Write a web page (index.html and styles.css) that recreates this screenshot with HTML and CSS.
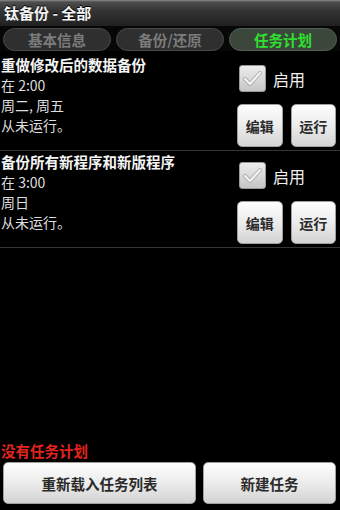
FILE: index.html
```html
<!DOCTYPE html>
<html lang="zh">
<head>
<meta charset="utf-8">
<link rel="stylesheet" href="styles.css">
</head>
<body>
<div class="app">
  <div class="titlebar">钛备份 - 全部</div>
  <div class="tabs">
    <div class="tab">基本信息</div>
    <div class="tab">备份/还原</div>
    <div class="tab active">任务计划</div>
  </div>
  <div class="list">
    <div class="row">
      <div class="info">
        <div class="name">重做修改后的数据备份</div>
        <div class="line">在 2:00</div>
        <div class="line">周二, 周五</div>
        <div class="line">从未运行。</div>
      </div>
      <div class="actions">
        <div class="enable">
          <span class="check"><svg width="27" height="27" viewBox="0 0 27 27"><path d="M6 14 L11 19 L21 8" fill="none" stroke="#a9a9a9" stroke-width="4" stroke-linecap="round" stroke-linejoin="round"/><path d="M6 14 L11 19 L21 8" fill="none" stroke="#f2f2f2" stroke-width="2.4" stroke-linecap="round" stroke-linejoin="round"/></svg></span>
          <span class="enable-label">启用</span>
        </div>
        <div class="btns">
          <div class="btn small">编辑</div>
          <div class="btn small">运行</div>
        </div>
      </div>
    </div>
    <div class="row">
      <div class="info">
        <div class="name">备份所有新程序和新版程序</div>
        <div class="line">在 3:00</div>
        <div class="line">周日</div>
        <div class="line">从未运行。</div>
      </div>
      <div class="actions">
        <div class="enable">
          <span class="check"><svg width="27" height="27" viewBox="0 0 27 27"><path d="M6 14 L11 19 L21 8" fill="none" stroke="#a9a9a9" stroke-width="4" stroke-linecap="round" stroke-linejoin="round"/><path d="M6 14 L11 19 L21 8" fill="none" stroke="#f2f2f2" stroke-width="2.4" stroke-linecap="round" stroke-linejoin="round"/></svg></span>
          <span class="enable-label">启用</span>
        </div>
        <div class="btns">
          <div class="btn small">编辑</div>
          <div class="btn small">运行</div>
        </div>
      </div>
    </div>
  </div>
  <div class="footer">
    <div class="status">没有任务计划</div>
    <div class="footer-btns">
      <div class="btn big">重新载入任务列表</div>
      <div class="btn big">新建任务</div>
    </div>
  </div>
</div>
</body>
</html>
```
FILE: styles.css
```css
* { box-sizing: border-box; }
html, body {
  margin: 0;
  padding: 0;
  background: #000;
}
body {
  font-family: "Noto Sans CJK SC", "Noto Sans", sans-serif;
  color: #e2e2e2;
}
.app {
  width: 340px;
  height: 510px;
  display: flex;
  flex-direction: column;
}
.titlebar {
  height: 26px;
  line-height: 25px;
  padding-left: 4px;
  font-size: 15px;
  font-weight: bold;
  color: #f4f4f4;
  background: linear-gradient(#8a8a8a 0, #4e4e4e 2px, #343434 40%, #202020 100%);
  text-shadow: 0 -1px 0 #000;
}
.tabs {
  display: grid;
  grid-template-columns: 1fr 1fr 1fr;
  gap: 5px;
  padding: 2px 3px 0 3px;
  background: #070707;
}
.tab {
  height: 23px;
  line-height: 21px;
  border-radius: 12px;
  border: 1px solid #4a4a4a;
  background: #2f2f2f;
  color: #7b7b7b;
  text-align: center;
  font-size: 14.5px;
  font-weight: bold;
}
.tab.active {
  background: #3b473b;
  border-color: #556055;
  color: #2fe02f;
}
.list {
  margin-top: 3px;
}
.row {
  height: 97px;
  border-bottom: 1px solid #353535;
  display: flex;
  justify-content: space-between;
  padding: 1px 4px 0 1px;
}
.info {
  line-height: 20px;
}
.name {
  font-size: 14.5px;
  font-weight: bold;
  color: #f4f4f4;
}
.line {
  font-size: 14px;
  color: #dedede;
}
.actions {
  width: 99px;
  padding-top: 10px;
  display: flex;
  flex-direction: column;
  gap: 12px;
}
.enable {
  display: flex;
  align-items: center;
  gap: 7px;
  padding-left: 2px;
}
.check {
  width: 27px;
  height: 27px;
  border-radius: 3px;
  background: linear-gradient(#ededed, #c6c6c6);
  border: 1px solid #9a9a9a;
  display: flex;
}
.check svg {
  margin: -1px;
}
.enable-label {
  font-size: 16px;
  color: #f0f0f0;
}
.btns {
  display: flex;
  gap: 8px;
}
.btn {
  background: linear-gradient(#fdfdfd, #ececec 50%, #d3d3d3);
  border: 1px solid #a0a0a0;
  border-radius: 5px;
  color: #2a2a2a;
  font-weight: bold;
  text-align: center;
  display: flex;
  align-items: center;
  justify-content: center;
}
.btn.small {
  width: 45.5px;
  height: 43px;
  font-size: 14px;
}
.footer {
  margin-top: auto;
  padding-bottom: 6px;
}
.status {
  color: #e3241f;
  font-size: 14.5px;
  font-weight: bold;
  line-height: 18px;
  padding-left: 1px;
  margin-bottom: 2px;
}
.footer-btns {
  display: grid;
  grid-template-columns: 193px 1fr;
  gap: 7px;
  padding: 0 4px 0 3px;
}
.btn.big {
  height: 42px;
  font-size: 14.5px;
}
```
